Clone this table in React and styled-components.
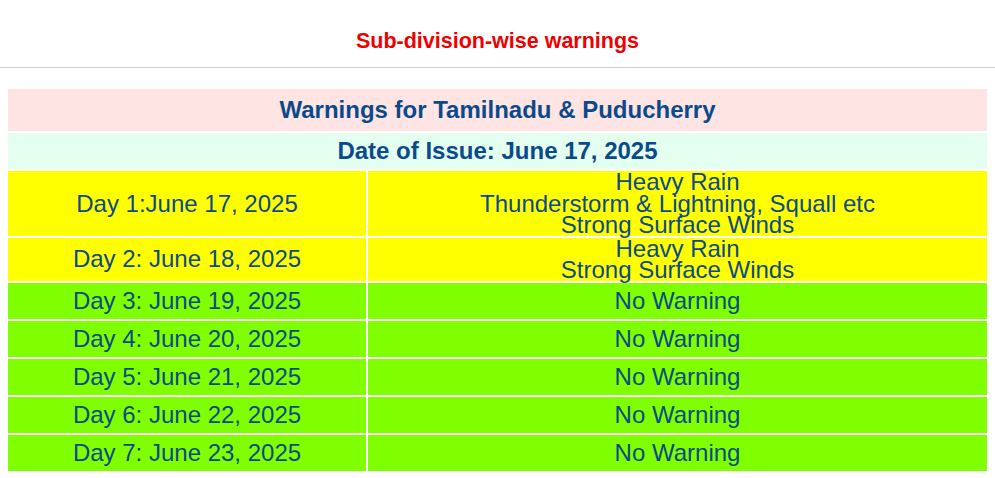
import React from "react";
import styled, { createGlobalStyle } from "styled-components";

const GlobalStyle = createGlobalStyle`
  body {
    margin: 0;
    background: #ffffff;
    font-family: "Liberation Sans", Arial, sans-serif;
  }
`;

const Page = styled.div`
  display: flex;
  flex-direction: column;
`;

const Title = styled.h2`
  margin: 0;
  height: 68px;
  display: flex;
  align-items: center;
  justify-content: center;
  padding-top: 15px;
  box-sizing: border-box;
  color: #ee0000;
  font-size: 21.5px;
  font-weight: bold;
  border-bottom: 1px solid #cccccc;
`;

const Board = styled.div`
  margin: 21px 8px 0;
  display: grid;
  grid-template-columns: 358px 1fr;
  gap: 2px;
  color: #0b4a8a;
  font-size: 24px;
`;

const Banner = styled.div`
  grid-column: 1 / -1;
  height: ${p => p.h}px;
  background: ${p => p.bg};
  display: flex;
  align-items: center;
  justify-content: center;
  font-weight: bold;
  font-size: 24px;
`;

const Cell = styled.div`
  min-height: 36px;
  background: ${p => (p.warn ? "#ffff00" : "#80ff00")};
  display: flex;
  flex-direction: column;
  align-items: center;
  justify-content: center;
  line-height: 21.5px;
  box-sizing: border-box;
  text-align: center;
`;

const days = [
  { day: "Day 1:June 17, 2025", items: ["Heavy Rain", "Thunderstorm & Lightning, Squall etc", "Strong Surface Winds"] },
  { day: "Day 2: June 18, 2025", items: ["Heavy Rain", "Strong Surface Winds"] },
  { day: "Day 3: June 19, 2025", items: [] },
  { day: "Day 4: June 20, 2025", items: [] },
  { day: "Day 5: June 21, 2025", items: [] },
  { day: "Day 6: June 22, 2025", items: [] },
  { day: "Day 7: June 23, 2025", items: [] }
];

export default function App() {
  return (
    <Page>
      <GlobalStyle />
      <Title>Sub-division-wise warnings</Title>
      <Board>
        <Banner h={42} bg="#ffe4e4">Warnings for Tamilnadu &amp; Puducherry</Banner>
        <Banner h={36} bg="#e4fff0">Date of Issue: June 17, 2025</Banner>
        {days.map(d => {
          const warn = d.items.length > 0;
          return (
            <React.Fragment key={d.day}>
              <Cell warn={warn}>{d.day}</Cell>
              <Cell warn={warn}>
                {warn ? d.items.map(t => <span key={t}>{t}</span>) : "No Warning"}
              </Cell>
            </React.Fragment>
          );
        })}
      </Board>
    </Page>
  );
}
